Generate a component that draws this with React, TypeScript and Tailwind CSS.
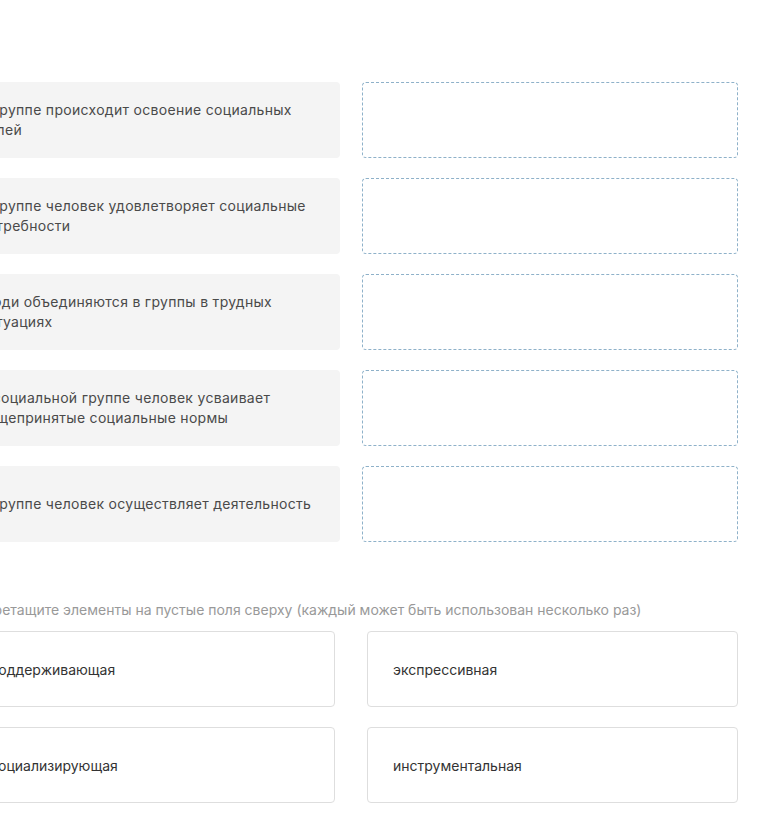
const pairs = [
  "В группе происходит освоение социальных ролей",
  "В группе человек удовлетворяет социальные потребности",
  "Люди объединяются в группы в трудных ситуациях",
  "В социальной группе человек усваивает общепринятые социальные нормы",
  "В группе человек осуществляет деятельность",
];

const options = ["поддерживающая", "экспрессивная", "социализирующая", "инструментальная"];

export default function App() {
  return (
    <div className="min-h-[816px] w-[763px] overflow-hidden bg-white font-['Inter','Noto_Sans',sans-serif] text-[14px]">
      <div className="ml-[-36px] w-[774px] pt-[82px]">
        <div className="flex flex-col gap-[20px]">
          {pairs.map((t) => (
            <div key={t} className="grid grid-cols-2 gap-[22px]">
              <div className="flex h-[76px] items-center rounded-[4px] bg-[#f4f4f4] pl-[15px] pr-[20px] leading-[20px] tracking-[0.3px] text-[#4a4a4a]">
                {t}
              </div>
              <div className="h-[76px] rounded-[4px] border border-dashed border-[#8eb1c9]" />
            </div>
          ))}
        </div>
        <p className="mt-[58px] pl-[11px] leading-[20px] text-[#999]">
          Перетащите элементы на пустые поля сверху (каждый может быть использован несколько раз)
        </p>
        <div className="mt-[11px] grid grid-cols-2 gap-x-[32px] gap-y-[20px]">
          {options.map((o) => (
            <div key={o} className="flex h-[76px] items-center rounded-[4px] border border-[#dedede] bg-white px-[25px] text-[#333]">
              {o}
            </div>
          ))}
        </div>
      </div>
    </div>
  );
}
